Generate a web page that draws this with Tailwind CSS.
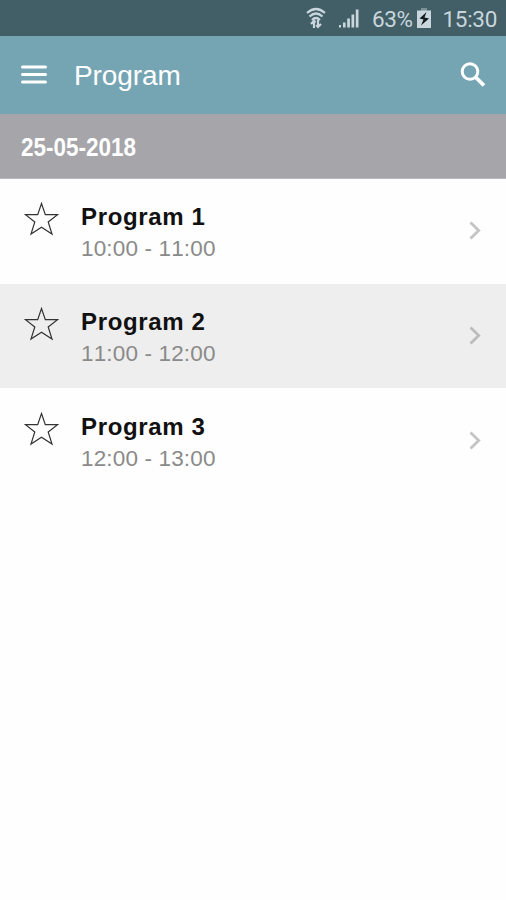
<!DOCTYPE html>
<html lang="en">
<head>
  <meta charset="UTF-8">
  <meta name="viewport" content="width=device-width, initial-scale=1.0">
  <title>Program</title>
  <script src="https://cdn.jsdelivr.net/npm/@tailwindcss/browser@4"></script>
</head>
<body class="bg-[#fefefe] min-h-screen font-['Liberation_Sans',Arial,sans-serif] [font-kerning:none]">
  <!-- Status bar -->
  <div class="h-9 bg-[#425e66] flex items-center justify-end pr-[9px] text-[#c9d6dd] font-['Roboto',sans-serif] text-[22.5px] leading-9">
    <svg class="w-5 h-6 mr-[13px]" viewBox="0 0 20 24" fill="none" stroke="currentColor" stroke-width="2.200">
      <path d="M1 7Q10 -1 19 7M3.500 10.500Q10 4.500 16.500 10.500M6 14Q10 10 14 14" />
      <path d="M8 22v-7M5 18L8 14.800L9.500 16.500M12 14v7M10.300 19l1.700 2l3-3" />
    </svg>
    <svg class="w-5 h-6 mr-[13px]" viewBox="0 0 20 24" fill="currentColor">
      <path d="M0 19h2v2.500H0zM4 16.500h2.600v5H4zM8.200 12.500h2.700v9H8.200zM12.500 8.500h2.700v13h-2.700zM16.800 3.500h2.700v18h-2.700z" />
    </svg>
    <span class="tracking-[-0.4px] mr-1 pt-px">63%</span>
    <svg class="w-4 h-6 mr-[10px]" viewBox="0 0 16 24">
      <path d="M5 2h6v2.500h4V22H1V4.500h4z" fill="#c9d6dd" />
      <path d="M5 2h6v2.500H5z" fill="#7d9096" />
      <path d="M10.500 6L3.500 12.500l4 1L5 19.500l8-7l-4.500-1z" fill="#141c20" />
    </svg>
    <span class="tracking-[-0.3px] pt-px">15:30</span>
  </div>

  <!-- App bar -->
  <header class="h-[78px] bg-[#75a5b3] flex items-center pl-5 pr-[19px] text-white">
    <svg class="w-7 h-6 mr-[26px]" viewBox="0 0 28 24" stroke="currentColor" stroke-width="3" stroke-linecap="round">
      <path d="M2.500 4h23M2.500 11.500h23M2.500 19h23" />
    </svg>
    <h1 class="text-[28px] leading-8 tracking-[-0.1px] pt-0.5">Program</h1>
    <svg class="w-7 h-7 ml-auto" viewBox="0 0 28 28" fill="none" stroke="currentColor" stroke-width="3">
      <circle cx="11" cy="10.500" r="7.800" />
      <path d="M16.500 16l8.500 8.500" stroke-width="3.800" />
    </svg>
  </header>

  <!-- Date heading -->
  <div class="h-[65px] bg-[#a6a5aa] border-b border-[#b9b8bc] flex items-center px-[21px]">
    <h2 class="text-white font-bold text-[25px] leading-8 pt-px scale-x-[0.9] origin-left">25-05-2018</h2>
  </div>

  <!-- Program list -->
  <ul>
    <li class="h-[105px] flex items-start pl-[23px] pr-[23px] pt-[21px]">
      <svg class="w-9 h-9 mr-[21px] mt-0.5" viewBox="0 0 36 36" fill="none" stroke="#333" stroke-width="1.200">
        <path d="M18.500 1.500L22.300 12.700H34.500L25.200 20L29 32L18.500 25.200L8 32L11.800 20L2.500 12.700H14.700Z" />
      </svg>
      <div class="pl-px pt-px">
        <p class="text-[24px] leading-8 tracking-[0.65px] font-bold text-[#111]">Program 1</p>
        <p class="text-[22.5px] leading-8 tracking-[0.15px] text-[#8a8a8a]">10:00 - 11:00</p>
      </div>
      <svg class="w-4 h-5 ml-auto mt-5" viewBox="0 0 16 20" fill="none" stroke="#c4c4c4" stroke-width="2.800">
        <path d="M3.500 2.500l8.200 8l-8.200 8" />
      </svg>
    </li>
    <li class="h-[104px] bg-[#eee] flex items-start pl-[23px] pr-[23px] pt-[21px]">
      <svg class="w-9 h-9 mr-[21px] mt-0.5" viewBox="0 0 36 36" fill="none" stroke="#333" stroke-width="1.200">
        <path d="M18.500 1.500L22.300 12.700H34.500L25.200 20L29 32L18.500 25.200L8 32L11.800 20L2.500 12.700H14.700Z" />
      </svg>
      <div class="pl-px pt-px">
        <p class="text-[24px] leading-8 tracking-[0.65px] font-bold text-[#111]">Program 2</p>
        <p class="text-[22.5px] leading-8 tracking-[0.15px] text-[#8a8a8a]">11:00 - 12:00</p>
      </div>
      <svg class="w-4 h-5 ml-auto mt-5" viewBox="0 0 16 20" fill="none" stroke="#bcbcbc" stroke-width="2.800">
        <path d="M3.500 2.500l8.200 8l-8.200 8" />
      </svg>
    </li>
    <li class="h-[105px] flex items-start pl-[23px] pr-[23px] pt-[22px]">
      <svg class="w-9 h-9 mr-[21px] mt-0.5" viewBox="0 0 36 36" fill="none" stroke="#333" stroke-width="1.200">
        <path d="M18.500 1.500L22.300 12.700H34.500L25.200 20L29 32L18.500 25.200L8 32L11.800 20L2.500 12.700H14.700Z" />
      </svg>
      <div class="pl-px pt-px">
        <p class="text-[24px] leading-8 tracking-[0.65px] font-bold text-[#111]">Program 3</p>
        <p class="text-[22.5px] leading-8 tracking-[0.15px] text-[#8a8a8a]">12:00 - 13:00</p>
      </div>
      <svg class="w-4 h-5 ml-auto mt-5" viewBox="0 0 16 20" fill="none" stroke="#c4c4c4" stroke-width="2.800">
        <path d="M3.500 2.500l8.200 8l-8.200 8" />
      </svg>
    </li>
  </ul>
</body>
</html>
